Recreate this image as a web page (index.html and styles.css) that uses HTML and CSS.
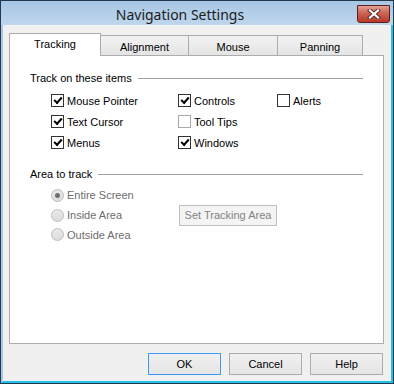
FILE: index.html
```html
<!DOCTYPE html>
<html lang="en">

<head>
  <meta charset="UTF-8">
  <title>Navigation Settings</title>
  <link rel="stylesheet" href="styles.css">
</head>

<body>
  <div class="window">
    <div class="titlebar">
      <span class="title">Navigation Settings</span>
      <button class="close" aria-label="Close">
        <svg width="16" height="10" viewBox="0 0 16 10">
          <path d="M4 1.5 L12 8.5 M12 1.5 L4 8.5" stroke="#5a2a26" stroke-width="4" stroke-linecap="square" />
          <path d="M4 1.5 L12 8.5 M12 1.5 L4 8.5" stroke="#fff" stroke-width="2.2" stroke-linecap="square" />
        </svg>
      </button>
    </div>

    <div class="client">
      <div class="tabs">
        <div class="tab active">Tracking</div>
        <div class="tab">Alignment</div>
        <div class="tab">Mouse</div>
        <div class="tab last">Panning</div>
      </div>

      <div class="panel">
        <div class="group-head">
          <span>Track on these items</span>
          <span class="rule"></span>
        </div>

        <div class="checks">
          <label class="check"><span class="box on"></span>Mouse Pointer</label>
          <label class="check"><span class="box on"></span>Controls</label>
          <label class="check"><span class="box"></span>Alerts</label>
          <label class="check"><span class="box on"></span>Text Cursor</label>
          <label class="check"><span class="box faded"></span>Tool Tips</label>
          <span></span>
          <label class="check"><span class="box on"></span>Menus</label>
          <label class="check"><span class="box on"></span>Windows</label>
        </div>

        <div class="group-head area-head">
          <span>Area to track</span>
          <span class="rule"></span>
        </div>

        <div class="area">
          <label class="radio"><span class="dot on"></span>Entire Screen</label>
          <span></span>
          <label class="radio"><span class="dot"></span>Inside Area</label>
          <button class="btn disabled">Set Tracking Area</button>
          <label class="radio"><span class="dot"></span>Outside Area</label>
        </div>
      </div>

      <div class="actions">
        <button class="btn default">OK</button>
        <button class="btn">Cancel</button>
        <button class="btn">Help</button>
      </div>
    </div>
  </div>
</body>

</html>
```

FILE: styles.css
```css
body {
  margin: 0;
  font-family: "Liberation Sans", Arial, sans-serif;
  font-size: 11px;
  color: #000;
}

.window {
  width: 394px;
  height: 384px;
  box-sizing: border-box;
  border: 1px solid #23384c;
  display: flex;
  flex-direction: column;
  background: #f0f0f0;
}

.titlebar {
  height: 24px;
  flex: none;
  position: relative;
  display: flex;
  align-items: center;
  justify-content: center;
  padding-right: 34px;
  background: linear-gradient(#a6c6e5, #bfd6ec);
}

.title {
  font-family: "Noto Sans", sans-serif;
  font-size: 14px;
  color: #1b1b1b;
  margin-top: 3px;
}

.close {
  position: absolute;
  top: 4px;
  right: 3px;
  width: 33px;
  height: 18px;
  padding: 0;
  border: 1px solid #5c1f1a;
  border-radius: 0 0 3px 3px;
  background: linear-gradient(#e3a096, #cc6252 45%, #b8392a);
  display: grid;
  place-content: center;
}

.client {
  flex: 1;
  display: flex;
  flex-direction: column;
  padding: 8px 7px 0 6px;
  border-left: 2px solid #a9c8e6;
  border-right: 2px solid #22bfe9;
  border-bottom: 2px solid #22bfe9;
}

.tabs {
  display: flex;
  align-items: flex-end;
  height: 22px;
}

.tab {
  height: 20px;
  box-sizing: border-box;
  border: 1px solid #acacac;
  border-bottom: none;
  border-right: none;
  background: linear-gradient(#f2f2f2, #e4e4e4);
  display: grid;
  place-content: center;
  padding-top: 2px;
}

.tab:nth-child(1) { width: 92px; }
.tab:nth-child(2) { width: 88px; }
.tab:nth-child(3) { width: 89px; }
.tab:nth-child(4) { width: 86px; }

.tab.last {
  border-right: 1px solid #acacac;
}

.tab.active {
  height: 23px;
  margin-bottom: -1px;
  background: #fff;
  border-right: 1px solid #acacac;
  margin-right: -1px;
  position: relative;
  z-index: 1;
  padding-top: 0;
  padding-bottom: 3px;
}

.panel {
  width: 375px;
  height: 289px;
  box-sizing: border-box;
  border: 1px solid #adadad;
  background: #fff;
  padding: 15px 20px 0 20px;
}

.group-head {
  display: flex;
  align-items: center;
  height: 14px;
  gap: 6px;
}

.rule {
  flex: 1;
  height: 1px;
  background: #a0a0a0;
}

.checks {
  display: grid;
  grid-template-columns: 127px 99px auto;
  grid-auto-rows: 21px;
  padding-left: 21px;
  margin-top: 5px;
}

.check,
.radio {
  display: flex;
  align-items: center;
  gap: 3px;
  white-space: nowrap;
}

.box {
  width: 13px;
  height: 13px;
  box-sizing: border-box;
  border: 1px solid #333;
  background: #fff;
  flex: none;
  display: grid;
  place-content: center;
}

.box.faded {
  border-color: #a8a8a8;
}

.box.on::after {
  content: "";
  width: 6px;
  height: 3px;
  border-left: 2px solid #000;
  border-bottom: 2px solid #000;
  transform: translate(0, -1px) rotate(-48deg);
}

.area-head {
  margin-top: 14px;
}

.area {
  display: grid;
  grid-template-columns: 128px auto;
  grid-auto-rows: 20px;
  padding-left: 21px;
  margin-top: 4px;
  color: #6d6d6d;
  align-items: center;
}

.area .radio:last-child {
  margin-top: -1px;
}

.dot {
  width: 13px;
  height: 13px;
  box-sizing: border-box;
  border-radius: 50%;
  border: 1px solid #bcbcbc;
  background: linear-gradient(#e9e9e9, #dcdcdc);
  flex: none;
  display: grid;
  place-content: center;
}

.dot.on::after {
  content: "";
  width: 5px;
  height: 5px;
  border-radius: 50%;
  background: #6e6e6e;
}

.btn {
  font-family: "Liberation Sans", Arial, sans-serif;
  font-size: 11px;
  color: #000;
  height: 22px;
  padding: 0;
  border: 1px solid #acacac;
  background: linear-gradient(#f0f0f0, #e5e5e5);
}

.btn.disabled {
  width: 98px;
  height: 21px;
  color: #838383;
  border-color: #bfbfbf;
  background: #f4f4f4;
}

.btn.default {
  border-color: #3c9af0;
}

.actions {
  display: flex;
  justify-content: flex-end;
  gap: 8px;
  margin-top: 9px;
  padding-right: 1px;
}

.actions .btn {
  width: 73px;
}
```
